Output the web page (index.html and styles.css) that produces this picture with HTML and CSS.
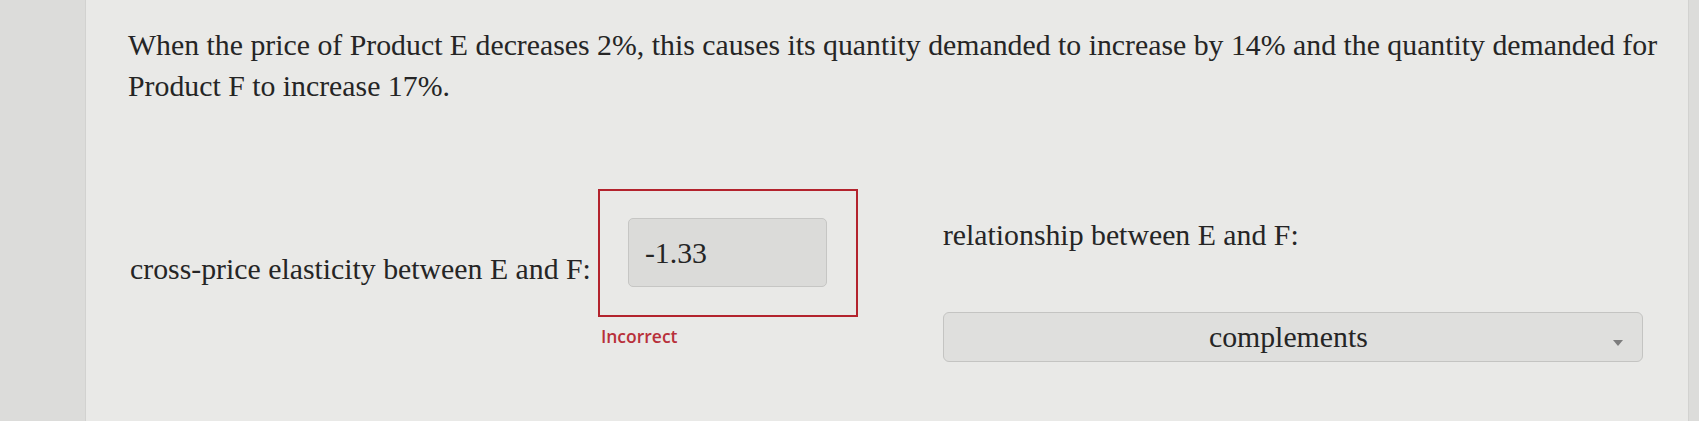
FILE: index.html
```html
<!DOCTYPE html>
<html lang="en">
<head>
<meta charset="utf-8">
<title>Cross-price elasticity</title>
<link rel="stylesheet" href="styles.css">
</head>
<body>
<div class="screen">
  <p class="prompt">When the price of Product E decreases 2%, this causes its quantity demanded to increase by 14% and the quantity demanded for Product F to increase 17%.</p>
  <div class="answers">
    <div class="field field-numeric">
      <span class="field-label">cross-price elasticity between E and F:</span>
      <div class="answer">
        <div class="answer-frame">
          <div class="answer-input">-1.33</div>
        </div>
        <div class="feedback">Incorrect</div>
      </div>
    </div>
    <div class="field field-select">
      <span class="field-label">relationship between E and F:</span>
      <div class="select">
        <span class="select-value">complements</span>
        <span class="select-caret"></span>
      </div>
    </div>
  </div>
</div>
</body>
</html>
```

FILE: styles.css
```css
html, body {
  margin: 0;
  padding: 0;
}

body {
  background: #dcdcda;
  font-family: "Liberation Serif", "Times New Roman", serif;
  color: #252525;
}

.screen {
  margin-left: 85px;
  width: 1604px;
  height: 421px;
  box-sizing: border-box;
  background: #e9e9e7;
  border-left: 1px solid #d2d2d0;
  border-right: 1px solid #d2d2d0;
  overflow: hidden;
}

.prompt {
  margin: 0;
  padding: 24px 6px 0 42px;
  font-size: 29.8px;
  line-height: 41px;
}

.answers {
  display: flex;
  gap: 85px;
  margin-top: 83px;
  padding-left: 44px;
}

.field-label {
  font-size: 29.8px;
  line-height: 41px;
  white-space: nowrap;
}

/* numeric answer with its feedback frame */
.field-numeric {
  display: flex;
  align-items: flex-start;
  gap: 7px;
}

.field-numeric .field-label {
  margin-top: 59px;
}

.answer-frame {
  width: 260px;
  height: 128px;
  box-sizing: border-box;
  border: 2px solid #b3232d;
  padding: 27px 29px 0 28px;
}

.answer-input {
  height: 69px;
  box-sizing: border-box;
  border: 1px solid #c6c6c4;
  border-radius: 5px;
  background: #dbdbd9;
  padding: 17px 16px 0;
  font-size: 29.8px;
  line-height: normal;
}

.feedback {
  margin-top: 7px;
  padding-left: 3px;
  font-family: "Open Sans", "Liberation Sans", sans-serif;
  font-size: 17.5px;
  font-weight: 600;
  color: #b8303a;
  line-height: normal;
}

/* dropdown answer */
.field-select {
  display: flex;
  flex-direction: column;
  width: 700px;
}

.field-select .field-label {
  margin-top: 25px;
}

.select {
  margin-top: 57px;
  height: 50px;
  box-sizing: border-box;
  border: 1px solid #c4c4c2;
  border-radius: 6px;
  background: #dfdfdd;
  display: flex;
  align-items: center;
  padding: 0 19px 0 20px;
}

.select-value {
  flex: 1;
  text-align: center;
  font-size: 29.8px;
  line-height: normal;
}

.select-caret {
  width: 0;
  height: 0;
  border-left: 5px solid transparent;
  border-right: 5px solid transparent;
  border-top: 6px solid #7d7d7d;
  margin-top: 12px;
}
```
